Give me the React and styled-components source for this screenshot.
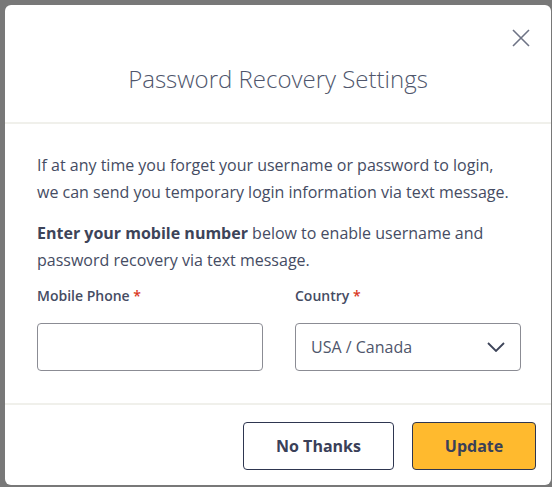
import React from "react"
import styled, { createGlobalStyle } from "styled-components"

const GlobalStyle = createGlobalStyle`
  html, body {
    margin: 0;
    background: #787878;
    font-family: "Open Sans", "Noto Sans", sans-serif;
  }
  * {
    box-sizing: border-box;
  }
`

const CloseIcon = () => (
  <svg width="18" height="18" viewBox="0 0 18 18" fill="none">
    <path d="M1 1L17 17M17 1L1 17" stroke="#6e7385" strokeWidth="1.6" />
  </svg>
)

const ChevronIcon = () => (
  <svg width="18" height="10" viewBox="0 0 18 10" fill="none">
    <path d="M1 1L9 9L17 1" stroke="#3d4459" strokeWidth="1.8" />
  </svg>
)

const App = () => {
  return (
    <>
      <GlobalStyle />
      <Modal>
        <Header>
          <Title>Password Recovery Settings</Title>
          <CloseButton aria-label="Close">
            <CloseIcon />
          </CloseButton>
        </Header>
        <Body>
          <Paragraph>
            If at any time you forget your username or password to login,
            <br />
            we can send you temporary login information via text message.
          </Paragraph>
          <Paragraph last>
            <strong>Enter your mobile number</strong> below to enable username and
            <br />
            password recovery via text message.
          </Paragraph>
          <Fields>
            <Field>
              <Label>
                Mobile Phone <Required>*</Required>
              </Label>
              <TextInput type="tel" />
            </Field>
            <Field>
              <Label>
                Country <Required>*</Required>
              </Label>
              <SelectBox>
                <span>USA / Canada</span>
                <ChevronIcon />
              </SelectBox>
            </Field>
          </Fields>
        </Body>
        <Footer>
          <Button width="151px">No Thanks</Button>
          <Button width="124px" primary>
            Update
          </Button>
        </Footer>
      </Modal>
    </>
  )
}

const Modal = styled.div`
  width: 546px;
  margin: 5px 0 0 5px;
  background: #fff;
  border-radius: 6px;
  color: #454c63;
`

const Header = styled.div`
  position: relative;
  display: flex;
  justify-content: center;
  padding: 58px 0 27px;
  border-bottom: 2px solid #f0f0eb;
`

const Title = styled.h2`
  margin: 0;
  font-size: 24px;
  line-height: 32px;
  font-weight: 300;
  color: #4f566c;
`

const CloseButton = styled.button`
  position: absolute;
  top: 24px;
  right: 21px;
  width: 18px;
  height: 18px;
  padding: 0;
  border: none;
  background: transparent;
  display: flex;
  cursor: pointer;
`

const Body = styled.div`
  padding: 28px 30px 32px 32px;
`

const Paragraph = styled.p`
  margin: 0 0 ${(props) => (props.last ? "12px" : "14px")};
  font-size: 16px;
  line-height: 27px;

  strong {
    font-weight: 700;
    color: #3d4459;
  }
`

const Fields = styled.div`
  display: grid;
  grid-template-columns: minmax(0, 1fr) minmax(0, 1fr);
  gap: 32px;
`

const Field = styled.div`
  display: flex;
  flex-direction: column;
  min-width: 0;
`

const Label = styled.label`
  font-size: 14px;
  line-height: 20px;
  font-weight: 600;
  margin-bottom: 17px;
`

const Required = styled.span`
  color: #d9381e;
`

const TextInput = styled.input`
  width: 100%;
  height: 48px;
  border: 1px solid #8b8c94;
  border-radius: 4px;
  padding: 0 14px;
  font-family: inherit;
  font-size: 16px;
  outline: none;
`

const SelectBox = styled.div`
  height: 48px;
  border: 1px solid #8b8c94;
  border-radius: 4px;
  padding: 0 15px 0 15px;
  display: flex;
  align-items: center;
  justify-content: space-between;
  font-size: 16px;
  color: #4f566c;
`

const Footer = styled.div`
  display: flex;
  justify-content: flex-end;
  gap: 18px;
  padding: 17px 15px 15px;
  border-top: 2px solid #f0f0eb;
`

const Button = styled.button`
  width: ${(props) => props.width};
  height: 48px;
  padding: 0;
  border: 1px solid #2e3650;
  border-radius: 4px;
  background: ${(props) => (props.primary ? "#ffba2e" : "#fff")};
  font-family: inherit;
  font-size: 16px;
  font-weight: 700;
  color: #3a4058;
  cursor: pointer;
`

export default App
